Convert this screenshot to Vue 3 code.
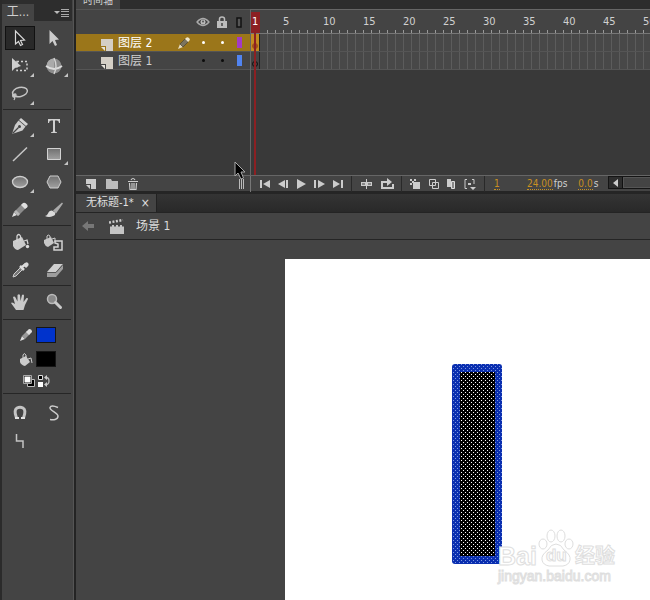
<script setup>
import { ref } from 'vue'

const corner = '<path d="M31 21v4h-4z" fill="#c4c4c4"/>'

const toolGroups = [
  [
    { name: 'Selection', icon: '<path d="M12.500 7v13l3-2.500 2 4 2-1-2-4 4-.5z" fill="#222" stroke="#d8d8d8" stroke-width="1.200"/>' },
    { name: 'Subselection', icon: '<path d="M12.500 6v14l3-3 2.500 5 2-1-2-5 4-.5z" fill="#ccc"/>' },
    { name: 'Free transform', icon: '<path d="M14 9.500h10v9H14z" fill="none" stroke="#d0d0d0" stroke-width="1.500" stroke-dasharray="2 2"/><path d="M9 6v13l3-3 6-2z" fill="#d0d0d0"/>' + corner },
    { name: '3D rotation', icon: '<circle cx="17" cy="14" r="7.500" fill="#8c8c8c"/><path d="M17 6.500a7.500 7.500 0 0 0-7.500 7.500q3 3 7.500 3z" fill="#aaa"/><path d="M9 14q8 6 16 0" fill="none" stroke="#dcdcdc" stroke-width="1.800"/><path d="M17 6q4 8 0 16" fill="none" stroke="#d4d4d4" stroke-width="1.400"/>' + corner },
    { name: 'Lasso', icon: '<ellipse cx="17" cy="12" rx="7.500" ry="4.500" fill="none" stroke="#c4c4c4" stroke-width="1.500" transform="rotate(-12 17 12)"/><path d="M10 14q-1 3 1 3t2-2-3 0q3 2 1 5" fill="none" stroke="#c4c4c4" stroke-width="1.300"/>' + corner }
  ],
  [
    { name: 'Pen', icon: '<path d="M18 6l7 6-2 2-7-6z" fill="#d2d2d2"/><path d="M15.500 8.500l7 6-3 4L9 22l3-9z" fill="#ccc"/><path d="M9.500 21.500l6-6" stroke="#444" stroke-width="1.200"/><circle cx="16.500" cy="14.500" r="1.500" fill="#444"/>' + corner },
    { name: 'Text', icon: '<path d="M11 7h12v4h-1q0-2.500-2-2.500h-2V19q0 1.200 2 1.200v.8h-6v-.8q2 0 2-1.200V8.500h-2q-2 0-2 2.500h-1z" fill="#d0d0d0"/>' },
    { name: 'Line', icon: '<path d="M10 21L24 7.500" stroke="#c6c6c6" stroke-width="1.500"/>' },
    { name: 'Rectangle', icon: '<path d="M10.500 8.500h13v11h-13z" fill="url(#shade)" stroke="#d2d2d2"/>' + corner },
    { name: 'Oval', icon: '<ellipse cx="17" cy="14" rx="7.500" ry="5.500" fill="url(#shade)" stroke="#cecece" stroke-width="1.300"/>' + corner },
    { name: 'PolyStar', icon: '<path d="M13 8h8l3 6-3 6h-8l-3-6z" fill="url(#shade)" stroke="#cecece"/>' },
    { name: 'Pencil', icon: '<path d="M9 21l2-5 3 3z" fill="#ddd"/><path d="M11 16l8-8 4 4-8 8z" fill="#8b8b8b"/><path d="M11 16l2-2 4 4-2 2z" fill="#b8b8b8"/><path d="M18 9l2-2q1.500-1 3.500 1t.5 3.500L22 13z" fill="#e0e0e0"/>' },
    { name: 'Brush', icon: '<path d="M25 6.500l-9 8 3 3 7-10z" fill="#aaa"/><path d="M15 14.500q-3 0-4 3-1 2-3 2.500 4 2 8 0 3-1 2-3.500z" fill="#dadada"/>' }
  ],
  [
    { name: 'Paint bucket', icon: '<path d="M10 13l9-4 4 8-8 5q-3 0-5-4z" fill="#ccc"/><path d="M14 14V8q1.500-3 3.500 0v5M21 13l3-1 1 4" fill="none" stroke="#d4d4d4" stroke-width="1.300"/><circle cx="24.500" cy="18.500" r="1.700" fill="#ddd"/>' },
    { name: 'Ink bottle', icon: '<path d="M7 12l7-3 3 6-6 4q-3-1-4-4z" fill="#c8c8c8"/><path d="M10 13V8q1-2 3 0v4M15 11l3-1v4" fill="none" stroke="#ccc"/><path d="M18 15v-2h7v9h-8v-3h4v-3z" fill="none" stroke="#d2d2d2" stroke-width="1.500"/>' },
    { name: 'Eyedropper', icon: '<path d="M10 21l1-3 7-7 2 2-7 7z" fill="#777" stroke="#ccc"/><path d="M17 10l4 4M19 11l4-3" stroke="#ddd" stroke-width="2.500"/><path d="M20 9q3-4 5-2t-2 5z" fill="#d8d8d8"/>' },
    { name: 'Eraser', icon: '<path d="M17 8h9l-7 8h-9z" fill="#cfcfcf"/><path d="M10 16h9v5h-9zM26 8v5l-7 8v-5z" fill="#9d9d9d"/><path d="M10 16.500h9l7-8" fill="none" stroke="#555"/>' }
  ],
  [
    { name: 'Hand', icon: '<path d="M13 22l-5-7q1-1.500 4 1l-2-7q1.500-1 2.500.5l2 4V7q1.500-1.500 2.500 0l.5 6 1.500-6q1.500-1 2 .5L20.500 14l3-4q1.500-.5 1.500 1l-3 6-1.500 5z" fill="#cacaca"/>' },
    { name: 'Zoom', icon: '<circle cx="15" cy="11" r="4.500" fill="#888" stroke="#bababa" stroke-width="1.500"/><path d="M18.500 14.500l5 5" stroke="#cacaca" stroke-width="3" stroke-linecap="round"/>' }
  ]
]

const optionTools = [
  { name: 'Snap to objects', icon: '<path d="M13.500 19q-3-8 .5-10 3-1.500 6 0 3.500 2 .5 10" fill="none" stroke="#c4c4c4" stroke-width="3"/><path d="M12 19h4M18 19h4" stroke="#e4e4e4" stroke-width="2"/>' },
  { name: 'Smooth', icon: '<path d="M21 8.500q-7-3-8 0c-1 3 8 5 8 8.500 0 4-5 4-8 3.500" fill="none" stroke="#ccc" stroke-width="1.500"/>' },
  { name: 'Straighten', icon: '<path d="M13.500 7v7h6.500v7" fill="none" stroke="#c4c4c4" stroke-width="1.500"/>' }
]

const layers = ref([
  { name: '图层 2', color: 'purple', active: true },
  { name: '图层 1', color: 'blue', active: false }
])

// the ruler shows a number on frame 1 and then on every fifth frame
const rulerMarks = Array.from({ length: 10 }, (_, i) => (i + 1) * 5)

const playback = [
  { name: 'First frame', icon: '<path d="M4 4h2v8H4zM14 4v8L7 8z"/>' },
  { name: 'Step back', icon: '<path d="M11 4v8L4 8zM12 4h2v8h-2z"/>' },
  { name: 'Play', icon: '<path d="M5 3v10l9-5z"/>' },
  { name: 'Step forward', icon: '<path d="M4 4h2v8H4zM8 4v8l7-4z"/>' },
  { name: 'Last frame', icon: '<path d="M5 4v8l7-4zM13 4h2v8h-2z"/>' }
]
const looping = [
  { name: 'Center frame', icon: '<path d="M8 3h1v10H8zM3 6h11v4H3z"/><path d="M4 8h3M10 8h3" stroke="#444"/>' },
  { name: 'Loop', icon: '<path d="M9 6H4v6h11V8" fill="none" stroke="#ccc" stroke-width="2"/><path d="M9 2l5 4-5 4z"/>' }
]
const onion = [
  { name: 'Onion skin', icon: '<path d="M3 3h2v2H3zM5 5h2v2H5zM7 3h2v2H7zM3 7h2v2H3zM6 6h7v7H6z"/>' },
  { name: 'Onion skin outlines', icon: '<path d="M4.500 3.500h6v6h-6zM7.500 6.500h6v6h-6z" fill="none" stroke="#ccc"/>' },
  { name: 'Edit multiple frames', icon: '<path d="M4 3h4v8H4z"/><path d="M8.500 5.500h3v7h-3z" fill="#888" stroke="#ddd"/>' },
  { name: 'Modify markers', icon: '<path d="M6 3.500H4v9h2M11 3.500h2V8" fill="none" stroke="#ccc"/><path d="M7 7h3v2H7zM9 11h6l-3 3z"/>' }
]

const activeTool = ref('Selection')
</script>

<template>
  <div class="app">
    <svg class="defs" width="0" height="0" aria-hidden="true">
      <linearGradient id="shade" x1="0" y1="0" x2="0" y2="1">
        <stop offset="0" stop-color="#707070" />
        <stop offset="1" stop-color="#a0a0a0" />
      </linearGradient>
    </svg>

    <aside class="tools">
      <header class="tools-head">
        <h2>工...</h2>
        <button class="menu" aria-label="Panel menu">
          <svg width="16" height="10" viewBox="0 0 16 10"><path d="M0 3h6L3 6z" fill="#bbb" /><path d="M7 1.500h8M7 3.500h8M7 6.500h8M7 8.500h8" stroke="#aaa" /></svg>
        </button>
      </header>

      <div v-for="(group, g) in toolGroups" :key="g" class="group">
        <button
          v-for="tool in group"
          :key="tool.name"
          class="tool"
          :class="{ selected: tool.name === activeTool }"
          :aria-label="tool.name"
          @click="activeTool = tool.name"
        >
          <svg width="34" height="28" viewBox="0 0 34 28" v-html="tool.icon"></svg>
        </button>
      </div>

      <div class="colors">
        <div class="color-row">
          <svg width="14" height="14" viewBox="0 0 14 14"><path d="M1 13l2-5 3 3z" fill="#ddd" /><path d="M3 8l5-5 3 3-5 5z" fill="#999" /><path d="M7 4l3-3q3 0 3 3l-3 3z" fill="#ddd" /></svg>
          <button class="swatch stroke" aria-label="Stroke color"></button>
        </div>
        <div class="color-row">
          <svg width="14" height="14" viewBox="0 0 14 14"><path d="M1 7l6-3 4 6-5 4q-4-1-5-4z" fill="#ccc" /><path d="M4 7V3q1-3 3 0v4M9 7l3-1 1 5" fill="none" stroke="#ccc" /></svg>
          <button class="swatch fill" aria-label="Fill color"></button>
        </div>
        <div class="color-row small">
          <button aria-label="Black and white">
            <svg width="12" height="12" viewBox="0 0 12 12"><path d="M4.500 4.500h7v7h-7z" fill="#000" stroke="#bbb" /><path d="M1 1h7v7H1z" fill="#fff" stroke="#111" /><path d="M.5.5h8v8h-8z" fill="none" stroke="#aaa" /></svg>
          </button>
          <button aria-label="Swap colors">
            <svg width="13" height="12" viewBox="0 0 13 12"><path d="M.5.5h4v4h-4z" fill="#000" stroke="#ddd" /><path d="M0 7h5v5H0z" fill="#fff" /><path d="M8 2.500q3 0 3 3.500t-3 3.500" fill="none" stroke="#bbb" stroke-width="1.300" /><path d="M9 0L6 2.500 9 5zM9 7L6 9.500 9 12z" fill="#ccc" /></svg>
          </button>
        </div>
      </div>

      <div class="group options">
        <button v-for="tool in optionTools" :key="tool.name" class="tool" :aria-label="tool.name">
          <svg width="34" height="28" viewBox="0 0 34 28" v-html="tool.icon"></svg>
        </button>
      </div>
    </aside>

    <main class="work">
      <section class="timeline">
        <div class="panel-tabs"><h2>时间轴</h2></div>

        <div class="tracks">
          <div class="layers">
            <div class="layer-head">
              <svg class="c-eye" width="14" height="10" viewBox="0 0 14 10"><path d="M1 5q6-7 12 0-6 7-12 0z" fill="none" stroke="#aaa" stroke-width="1.300" /><circle cx="7" cy="5" r="2.500" fill="#bbb" /><circle cx="7" cy="4.500" r="1" fill="#555" /></svg>
              <svg class="c-lock" width="10" height="12" viewBox="0 0 10 12"><path d="M0 5h10v7H0z" fill="#bdbdbd" /><path d="M2.500 5V3q0-2 2.500-2t2.500 2v2" fill="none" stroke="#bdbdbd" stroke-width="1.500" /><path d="M5 7v3" stroke="#444" stroke-width="1.500" /></svg>
              <svg class="c-box" width="6" height="11" viewBox="0 0 6 11"><path d="M1 1h4v9H1z" fill="#555" stroke="#111" stroke-width="1.500" /></svg>
            </div>
            <div v-for="layer in layers" :key="layer.name" class="layer" :class="{ active: layer.active }">
              <svg class="page" width="12" height="12" viewBox="0 0 12 12"><path d="M0 0h12v12H5V7H0z" fill="#d4cfc6" /><path d="M0 8h4v4z" fill="#e8e4dc" /></svg>
              <span class="name">{{ layer.name }}</span>
              <span class="edit">
                <svg v-if="layer.active" width="12" height="12" viewBox="0 0 12 12"><path d="M0 12l2-5 3 3z" fill="#e6dcc0" /><path d="M2 7l5-5 3 3-5 5z" fill="#7b7460" stroke="#333" stroke-width=".5" /><path d="M7 2q2-3 4-1t-1 4z" fill="#eee6cc" /></svg>
              </span>
              <i class="dot"></i>
              <i class="dot"></i>
              <i class="chip" :class="layer.color"></i>
            </div>
          </div>

          <div class="frames">
            <div class="ruler">
              <span class="mark first">1</span>
              <span v-for="n in rulerMarks" :key="n" class="mark">{{ n }}</span>
            </div>
            <div v-for="layer in layers" :key="layer.name" class="frame-row">
              <span class="frame" :class="{ active: layer.active }"><i></i></span>
            </div>
            <div class="playhead"></div>
          </div>
        </div>

        <footer class="controls">
          <div class="layer-actions">
            <button aria-label="New layer"><svg width="18" height="16" viewBox="0 0 18 16"><path d="M4 3h10v10H9V8H4zM4 9h4v4z" fill="#ccc" /></svg></button>
            <button aria-label="New folder"><svg width="18" height="16" viewBox="0 0 18 16"><path d="M3 3h5l1 2h6v8H3z" fill="#bcbcbc" /></svg></button>
            <button aria-label="Delete layer"><svg width="18" height="16" viewBox="0 0 18 16"><path d="M4 5.500h10M7 4q2-3 4 0M5.500 7l.5 6.500h6l.5-6.500M8 7v6M10 7v6" fill="none" stroke="#ccc" stroke-width="1.200" /></svg></button>
            <span class="grip"></span>
          </div>
          <div class="set">
            <button v-for="b in playback" :key="b.name" :aria-label="b.name"><svg width="18" height="16" viewBox="0 0 18 16" fill="#ccc" v-html="b.icon"></svg></button>
          </div>
          <div class="set wide">
            <button v-for="b in looping" :key="b.name" :aria-label="b.name"><svg width="18" height="16" viewBox="0 0 18 16" fill="#ccc" v-html="b.icon"></svg></button>
          </div>
          <div class="set">
            <button v-for="b in onion" :key="b.name" :aria-label="b.name"><svg width="18" height="16" viewBox="0 0 18 16" fill="#ccc" v-html="b.icon"></svg></button>
          </div>
          <div class="readout">
            <span class="current"><a href="#">1</a></span>
            <span class="value"><a href="#">24.00</a><span>fps</span></span>
            <span class="value"><a href="#">0.0</a><span>s</span></span>
          </div>
          <div class="scroll">
            <button aria-label="Scroll left"><svg width="5" height="8" viewBox="0 0 5 8"><path d="M5 0v8L0 4z" fill="#ccc" /></svg></button>
            <div class="thumb"></div>
          </div>
        </footer>

        <svg class="pointer" width="12" height="20" viewBox="0 0 12 20"><path d="M1 1v14l3-3 3 6 2.500-1-2.500-6h4z" fill="#000" stroke="#aaa" /></svg>
      </section>

      <nav class="doc-tabs">
        <div class="doc-tab"><span>无标题-1*</span><button aria-label="Close">×</button></div>
      </nav>

      <div class="scene">
        <button aria-label="Back"><svg width="12" height="10" viewBox="0 0 12 10"><path d="M0 5l6-5v3h6v4H6v3z" fill="#777" /></svg></button>
        <svg class="clapper" width="16" height="15" viewBox="0 0 16 15"><path d="M1 6h14v9H1z" fill="#c4c4c4" /><path d="M0 3.500L14 1" stroke="#ccc" stroke-width="2.500" stroke-dasharray="2 1.500" /><path d="M1 6.500h14" stroke="#444" stroke-width="2" stroke-dasharray="2 2" /></svg>
        <span>场景 1</span>
      </div>

      <div class="pasteboard">
        <div class="canvas">
          <svg class="shape" width="50" height="200" viewBox="0 0 50 200">
            <defs>
              <pattern id="dots" width="4" height="4" patternUnits="userSpaceOnUse">
                <path d="M1 0h1v1H1zM3 2h1v1H3z" fill="#fff" />
              </pattern>
              <pattern id="blue-dots" width="4" height="4" patternUnits="userSpaceOnUse">
                <path d="M1 0h1v1H1zM3 2h1v1H3z" fill="#8098e0" />
              </pattern>
            </defs>
            <rect width="50" height="200" rx="3" fill="#0a2fb0" />
            <rect width="50" height="200" rx="3" fill="url(#blue-dots)" />
            <path d="M8 8h35v184H8z" fill="#000" />
            <path d="M8 8h35v184H8z" fill="url(#dots)" />
          </svg>
          <div class="watermark">
            <div class="brand">
              <span>Bai</span>
              <span class="paw">
                <svg width="36" height="38" viewBox="0 0 36 38" fill="#fff" stroke="#dedede"><ellipse cx="5" cy="15" rx="4" ry="5" /><ellipse cx="13" cy="7" rx="4" ry="6" /><ellipse cx="23" cy="7" rx="4" ry="6" /><ellipse cx="31" cy="15" rx="4" ry="5" /><path d="M18 15q5 0 8 6 7 5 6 10t-7 6H11q-6-1-7-6t6-10q3-6 8-6z" /></svg>
                <b>du</b>
              </span>
              <span class="cn">经验</span>
            </div>
            <div class="site">jingyan.baidu.com</div>
          </div>
        </div>
      </div>
    </main>
  </div>
</template>

<style>
body {
  background: #444;
}
</style>

<style scoped>
.app {
  display: flex;
  min-height: 100vh;
  background: #444;
  color: #d0d0d0;
  font-family: "DejaVu Sans Condensed", "Noto Sans CJK SC", sans-serif;
  font-size: 11px;
  line-height: 16px;
  overflow: hidden;
}

.defs {
  position: absolute;
}

button {
  padding: 0;
  border: 0;
  background: none;
  color: inherit;
  font: inherit;
}

svg {
  display: block;
}

h2 {
  margin: 0;
  font-size: 12px;
  font-weight: normal;
}

/* tools */
.tools {
  box-sizing: border-box;
  flex: none;
  width: 76px;
  border-left: 2px solid #2b2b2b;
  border-right: 2px solid #242424;
  box-shadow: inset -1px 0 #555;
  padding: 0 3px 0 1px;
}

.tools-head {
  display: flex;
  justify-content: space-between;
  height: 21px;
  margin: 0 -1px 3px;
  background: #2d2d2d;
}

.tools-head h2 {
  width: 32px;
  height: 17px;
  margin-top: 4px;
  background: #444;
  text-align: center;
}

.menu {
  padding: 4px 2px 0 0;
}

.group {
  display: grid;
  grid-template-columns: 34px 34px;
}

.group + .group,
.colors,
.options {
  margin-top: 1px;
  border-top: 1px solid #262626;
  padding-top: 2px;
}

.tool {
  height: 28px;
}

.tool.selected {
  background: #292929;
  background-clip: content-box;
  padding: 2px;
  outline: 1px solid #111;
  outline-offset: -3px;
}

.tool.selected svg {
  margin: -2px;
}

.colors {
  margin-top: 3px;
  padding-top: 7px;
}

.color-row {
  display: flex;
  align-items: center;
  gap: 3px;
  margin-bottom: 8px;
  padding-left: 16px;
}

.color-row.small {
  gap: 3px;
  margin-bottom: 0;
  padding-left: 20px;
}

.swatch {
  width: 20px;
  height: 16px;
  border: 1px solid #161616;
}

.swatch.stroke {
  background: #0033cc;
}

.swatch.fill {
  background: #000;
}

.options {
  margin-top: 6px;
  padding-top: 5px;
}

/* timeline */
.work {
  flex: 1;
  min-width: 0;
  display: flex;
  flex-direction: column;
}

.timeline {
  position: relative;
  border-bottom: 3px solid #252525;
}

.panel-tabs {
  display: flex;
  align-items: flex-end;
  height: 9px;
  overflow: hidden;
  background: #2d2d2d;
}

.panel-tabs h2 {
  padding: 0 7px;
  background: #444;
  font-size: 10px;
}

.tracks {
  display: flex;
  height: 166px;
  background: #393939;
}

.layers {
  flex: none;
  width: 175px;
  border-right: 1px solid #666;
  box-sizing: border-box;
}

.layer-head,
.layer {
  display: grid;
  grid-template-columns: 37px 5px 57px 18px 20px 18px 16px;
  align-items: center;
  justify-items: center;
}

.layer-head {
  height: 25px;
  border-top: 1px solid #555;
  box-sizing: border-box;
  background: #444;
}

.c-eye {
  grid-column: 5;
}

.c-lock {
  grid-column: 6;
}

.c-box {
  grid-column: 7;
}

.layer {
  height: 18px;
  border-bottom: 1px solid #555;
  box-sizing: border-box;
  background: #444;
}

.layer.active {
  background: #9b761a;
  color: #fff;
}

.page {
  grid-column: 1;
  justify-self: end;
  align-self: end;
}

.name {
  grid-column: 3;
  justify-self: start;
  font-size: 12px;
  white-space: nowrap;
}

.dot {
  width: 3px;
  height: 3px;
  border-radius: 2px;
  background: #0c0c0c;
}

.active .dot {
  background: #fff;
}

.chip {
  width: 5px;
  height: 11px;
}

.purple {
  background: #a23ac8;
}

.blue {
  background: #5184f0;
}

.frames {
  position: relative;
  flex: 1;
  min-width: 0;
  overflow: hidden;
}

.ruler {
  display: flex;
  box-sizing: border-box;
  height: 25px;
  border-top: 1px solid #666;
  border-bottom: 1px solid #777;
  padding-top: 4px;
  background: repeating-linear-gradient(90deg, #999 0 1px, transparent 1px 8px) 0 bottom / 100% 3px no-repeat, #444;
  overflow: hidden;
}

.mark {
  flex: none;
  width: 40px;
}

.mark.first {
  position: relative;
  z-index: 1;
  width: 32px;
  padding-left: 1px;
  box-sizing: border-box;
  color: #fff;
}

.frame-row {
  box-sizing: border-box;
  height: 18px;
  border-bottom: 1px solid #555;
  background: repeating-linear-gradient(90deg, #5c5c5c 0 1px, #484848 1px 8px);
}

.frame {
  display: flex;
  align-items: flex-end;
  justify-content: center;
  box-sizing: border-box;
  width: 9px;
  height: 17px;
  border-right: 1px solid #222;
  padding-bottom: 2px;
  background: #444;
}

.frame i {
  box-sizing: border-box;
  width: 6px;
  height: 6px;
  border: 1px solid #111;
  border-radius: 3px;
}

.frame.active {
  background: #c38b20;
}

.frame.active i {
  border-color: #a05018;
  background: #a05018;
}

.playhead {
  position: absolute;
  inset: 3px auto 0 0;
  width: 9px;
  background:
    linear-gradient(#8c2023, #8c2023) 0 0 / 9px 21px no-repeat,
    linear-gradient(#8c2023, #8c2023) 3px 0 / 2px 100% no-repeat;
}

.controls {
  display: flex;
  align-items: center;
  box-sizing: border-box;
  height: 16px;
  border-top: 1px solid #666;
}

.layer-actions {
  display: flex;
  align-items: center;
  gap: 3px;
  box-sizing: border-box;
  width: 175px;
  padding: 0 6px;
  border-right: 1px solid #777;
}

.grip {
  width: 5px;
  height: 10px;
  margin-left: auto;
  background: repeating-linear-gradient(90deg, #bbb 0 1px, transparent 1px 2px);
}

.set {
  display: flex;
  padding: 0 5px;
  border-right: 1px solid #292929;
}

.set.wide {
  gap: 2px;
  padding: 0 5px 0 6px;
}

.readout {
  display: flex;
  gap: 11px;
  width: 123px;
  box-sizing: border-box;
  padding-left: 9px;
  white-space: nowrap;
  font-size: 10px;
  line-height: 14px;
}

.readout a {
  color: #c88f22;
  text-decoration: none;
  border-bottom: 1px dotted #c88f22;
}

.current {
  width: 22px;
}

.value {
  display: flex;
  align-items: baseline;
  gap: 1px;
}

.value a {
  line-height: 11px;
}

.scroll {
  display: flex;
  flex: 1;
  align-self: stretch;
  margin-bottom: 2px;
  background: #444;
  border: 1px solid #151515;
  border-right: 0;
}

.scroll button {
  display: flex;
  align-items: center;
  justify-content: center;
  width: 14px;
  background: #2e2e2e;
  border-right: 1px solid #111;
}

.thumb {
  flex: 1;
  border: 1px solid #555;
  border-right: 0;
}

.pointer {
  position: absolute;
  left: 158px;
  top: 161px;
}

/* document */
.doc-tabs {
  display: flex;
  height: 19px;
  background: linear-gradient(#343434, #292929);
  border-bottom: 1px solid #242424;
  box-sizing: border-box;
}

.doc-tab {
  display: flex;
  align-items: center;
  gap: 7px;
  padding: 0 6px 0 10px;
  border-right: 1px solid #222;
  background: #444;
  color: #e0e0e0;
}

.doc-tab button {
  font-size: 12px;
}

.scene {
  display: flex;
  align-items: center;
  gap: 11px;
  height: 26px;
  padding: 0 6px;
  border-bottom: 1px solid #252525;
  color: #ddd;
  font-size: 12px;
}

.clapper {
  margin-left: 4px;
}

.pasteboard {
  flex: 1;
  display: flex;
  padding: 19px 0 0 209px;
}

.canvas {
  position: relative;
  flex: 1;
  min-height: 341px;
  background: #fff;
}

.shape {
  position: absolute;
  left: 167px;
  top: 105px;
}

.watermark {
  position: absolute;
  left: 213px;
  top: 270px;
  color: #fff;
  font-family: "Liberation Sans", "Noto Sans CJK SC", sans-serif;
  -webkit-text-stroke: 1px #dedede;
}

.brand {
  display: flex;
  align-items: flex-end;
  gap: 1px;
  height: 38px;
  font-size: 25px;
  font-weight: bold;
  line-height: 22px;
}

.paw {
  position: relative;
}

.paw b {
  position: absolute;
  left: 8px;
  bottom: 0;
  font-size: 17px;
}

.cn {
  font-size: 20px;
}

.site {
  font-size: 14px;
  line-height: 18px;
}
</style>
